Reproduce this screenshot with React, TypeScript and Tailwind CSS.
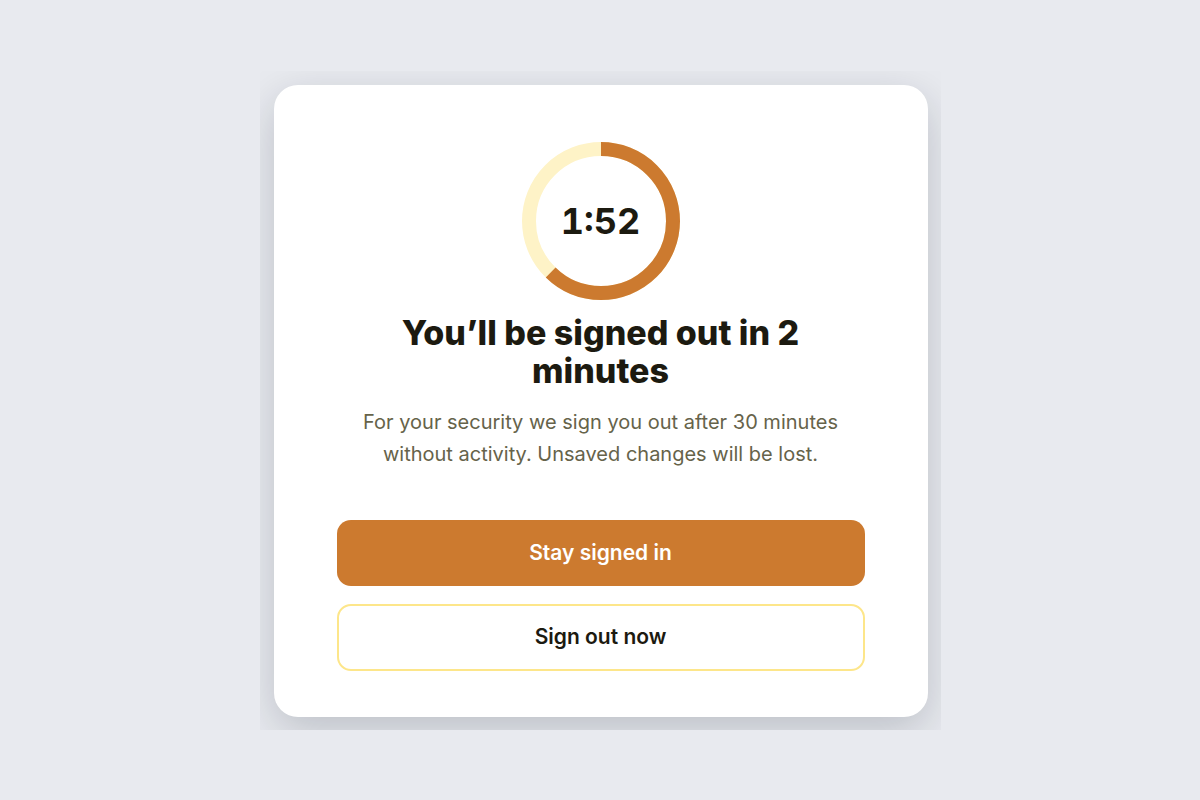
import React from "react";

const TOTAL = 180;
const LEFT = 112;

function Countdown() {
  const r = 72;
  const c = 2 * Math.PI * r;
  const frac = LEFT / TOTAL;
  return (
    <div className="relative w-[158px] h-[158px]">
      <svg viewBox="0 0 158 158" className="w-[158px] h-[158px] -rotate-90">
        <circle cx="79" cy="79" r={r} fill="none" stroke="#fef3c7" strokeWidth="14" />
        <circle
          cx="79"
          cy="79"
          r={r}
          fill="none"
          stroke="#cc7a2f"
          strokeWidth="14"
          strokeDasharray={`${c * frac} ${c}`}
        />
      </svg>
      <div className="absolute inset-0 flex items-center justify-center text-[36px] font-bold text-[#1c1a10] tabular-nums">
        1:52
      </div>
    </div>
  );
}

export default function App() {
  return (
    <div
      className="min-h-screen w-full bg-[#e8eaef] flex items-center justify-center"
      style={{ fontFamily: "Inter, 'Noto Sans', sans-serif" }}
    >
      <div className="overflow-hidden p-[14px] pr-[13px] pb-[13px]">
        <div className="w-[654px] bg-white rounded-3xl shadow-[0_14px_44px_rgba(15,23,42,0.2)] px-[63px] pt-[57px] pb-[46px] flex flex-col items-center">
          <Countdown />
          <h1 className="mt-[14px] max-w-[470px] text-[34px] leading-[38px] font-extrabold text-[#1c1a10] text-center">
            You’ll be signed out in 2 minutes
          </h1>
          <p className="mt-4 text-xl leading-8 text-[#66634a] text-center max-w-[500px]">
            For your security we sign you out after 30 minutes without activity. Unsaved changes will be lost.
          </p>
          <div className="mt-[50px] w-full flex flex-col gap-[18px]">
            <button className="h-[66px] w-full rounded-[14px] bg-[#cc7a2f] text-white text-[21px] font-semibold">
              Stay signed in
            </button>
            <button className="h-[67px] w-full rounded-[14px] border-2 border-[#fde68a] bg-white text-[#1c1a10] text-[21px] font-semibold">
              Sign out now
            </button>
          </div>
        </div>
      </div>
    </div>
  );
}
